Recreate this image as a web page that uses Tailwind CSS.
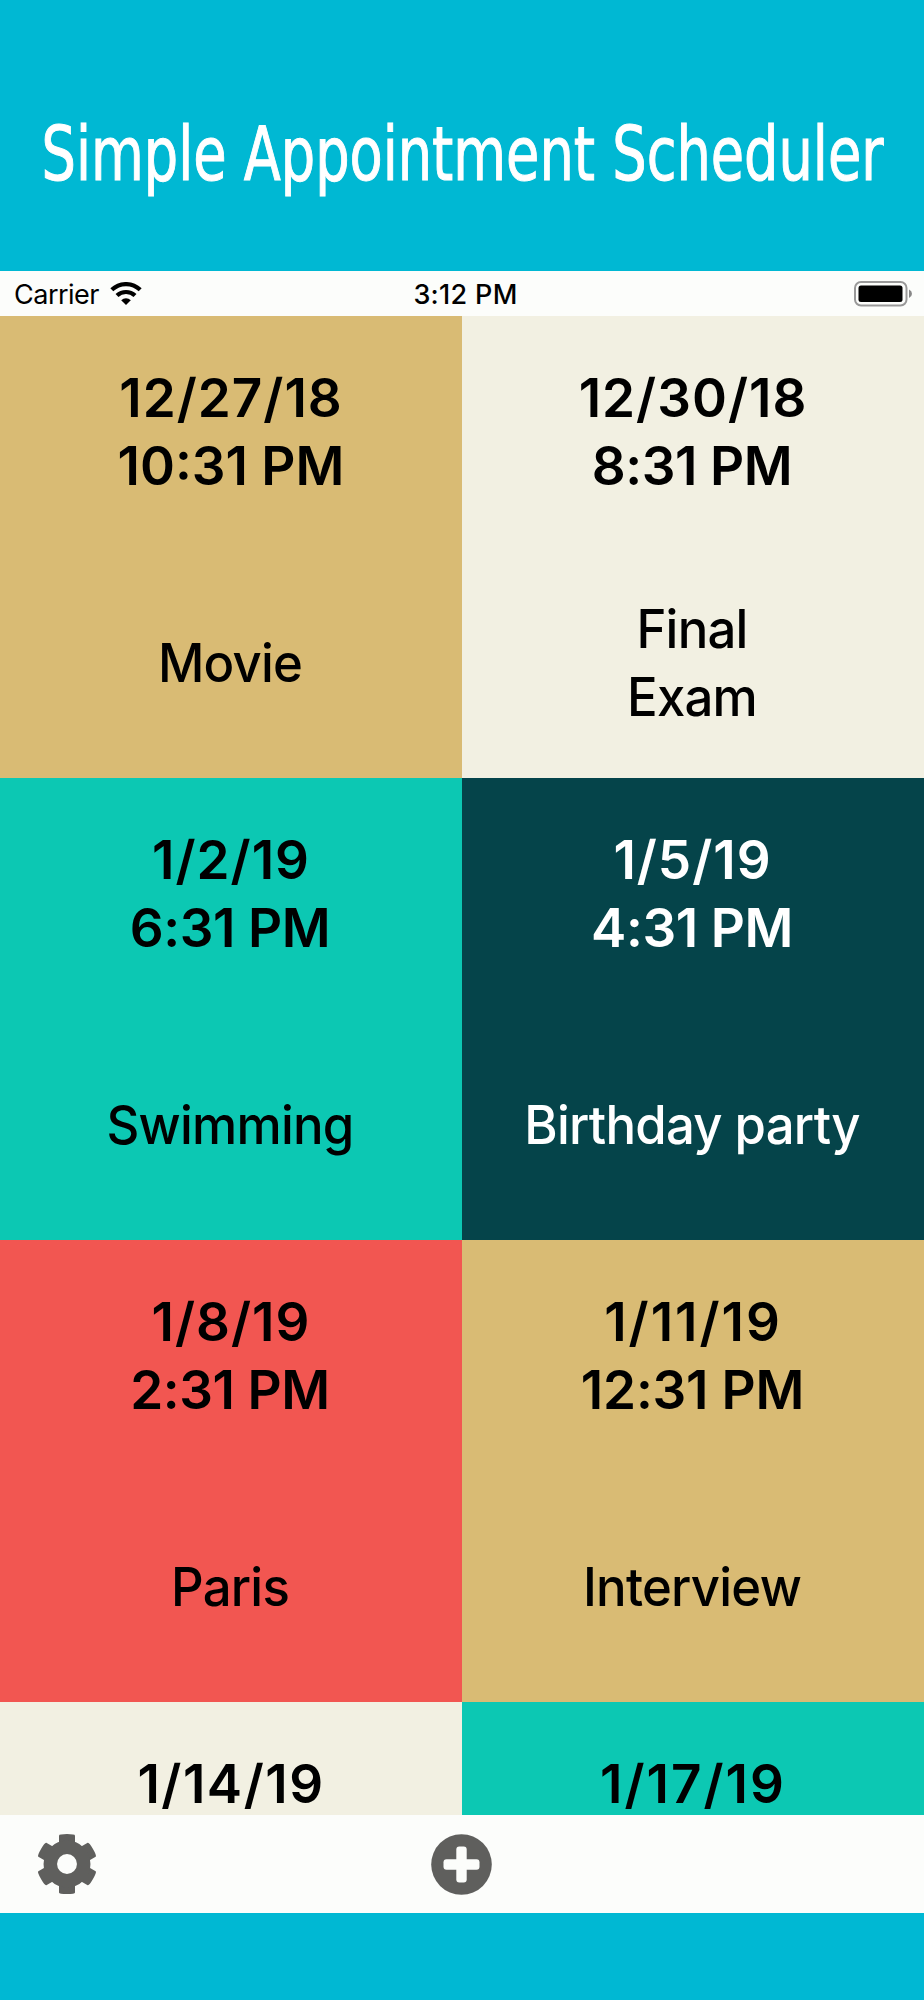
<!DOCTYPE html>
<html lang="en">
<head>
    <meta charset="UTF-8">
    <meta name="viewport" content="width=device-width, initial-scale=1.0">
    <title>Simple Appointment Scheduler</title>
    <script src="https://cdn.jsdelivr.net/npm/@tailwindcss/browser@4"></script>
</head>
<body class="bg-[#00b8d3] text-black w-[924px] h-[2000px] overflow-hidden font-['Inter',sans-serif]">

    <!-- Title -->
    <header class="h-[271px]">
        <svg class="block w-full h-full overflow-visible" viewBox="0 0 924 271" fill="#fff" stroke="#fff" stroke-width="1">
            <text x="41.500" y="179.500" font-family="'DejaVu Sans Condensed','DejaVu Sans',sans-serif" font-size="74.500" textLength="842" lengthAdjust="spacingAndGlyphs">Simple Appointment Scheduler</text>
        </svg>
    </header>

    <!-- Status bar -->
    <div class="h-[45px] bg-[#fcfdfb] grid grid-cols-3 items-center pl-[14px] pr-[11px] text-[27px]">
        <div class="flex items-center gap-[11px]">
            <span class="pt-[3px] tracking-[-0.5px]">Carrier</span>
            <svg class="w-[32px] h-[23px]" viewBox="0 0 32 23" fill="none" stroke="#000" stroke-width="4.200">
                <path d="M1.800 7.800a20.500 20.500 0 0 1 28.400 0"/>
                <path d="M7 13.600a13 13 0 0 1 18 0"/>
                <path d="M11.200 18.200a7 7 0 0 1 9.600 0L16 23z" fill="#000" stroke="none"/>
            </svg>
        </div>
        <span class="text-center font-[550] tracking-[0.3px] pt-[3px] pl-[4px]">3:12 PM</span>
        <svg class="w-[59px] h-[26px] justify-self-end" viewBox="0 0 59 26">
            <rect x="1" y="1" width="51.500" height="23.500" rx="6" fill="none" stroke="#999" stroke-width="2"/>
            <rect x="4.500" y="4.500" width="44" height="16.500" rx="2.500"/>
            <path d="M55 8.500q3 1.500 3 4.300t-3 4.300z" fill="#888"/>
        </svg>
    </div>

    <!-- Appointments -->
    <main class="grid grid-cols-2 auto-rows-[462px] h-[1499px] overflow-hidden text-center text-[53px] leading-[68px]">
        <section class="bg-[#d9bb74] pt-[48px]">
            <div class="h-[136px] font-semibold"><span class="tracking-[1px]">12/27/18</span><br>10:31 PM</div>
            <div class="h-[196px] mt-[65px] pr-[2px] flex items-center justify-center font-medium tracking-[-0.8px] scale-x-96">Movie</div>
        </section>
        <section class="bg-[#f2f0e2] pt-[48px]">
            <div class="h-[136px] font-semibold"><span class="tracking-[1px]">12/30/18</span><br><span class="tracking-[-0.4px] pr-[2px]">8:31 PM</span></div>
            <div class="h-[196px] mt-[65px] pr-[2px] flex items-center justify-center font-medium tracking-[-0.8px] scale-x-96">Final<br>Exam</div>
        </section>
        <section class="bg-[#0cc8b3] pt-[48px]">
            <div class="h-[136px] font-semibold"><span class="tracking-[1px]">1/2/19</span><br><span class="tracking-[-0.4px] pr-[2px]">6:31 PM</span></div>
            <div class="h-[196px] mt-[65px] pr-[2px] flex items-center justify-center font-medium tracking-[-0.8px] scale-x-96">Swimming</div>
        </section>
        <section class="bg-[#05444a] pt-[48px] text-white">
            <div class="h-[136px] font-semibold"><span class="tracking-[1px] pr-[1px]">1/5/19</span><br><span class="tracking-[-0.4px] pr-[2px]">4:31 PM</span></div>
            <div class="h-[196px] mt-[65px] pr-[2px] flex items-center justify-center font-medium tracking-[-0.8px] scale-x-96">Birthday party</div>
        </section>
        <section class="bg-[#f25651] pt-[48px]">
            <div class="h-[136px] font-semibold"><span class="tracking-[1px]">1/8/19</span><br><span class="tracking-[-0.4px] pr-[2px]">2:31 PM</span></div>
            <div class="h-[196px] mt-[65px] pr-[2px] flex items-center justify-center font-medium tracking-[-0.8px] scale-x-96">Paris</div>
        </section>
        <section class="bg-[#d9bb74] pt-[48px]">
            <div class="h-[136px] font-semibold"><span class="tracking-[2px]">1/11/19</span><br><span class="tracking-[-0.2px] pr-[1px]">12:31 PM</span></div>
            <div class="h-[196px] mt-[65px] pr-[2px] flex items-center justify-center font-medium tracking-[-0.8px] scale-x-96">Interview</div>
        </section>
        <section class="bg-[#f2f0e2] pt-[48px]">
            <div class="h-[136px] font-semibold tracking-[1.5px]">1/14/19</div>
        </section>
        <section class="bg-[#0cc8b3] pt-[48px]">
            <div class="h-[136px] font-semibold tracking-[2px]">1/17/19</div>
        </section>
    </main>

    <!-- Toolbar -->
    <nav class="h-[98px] bg-[#fcfdfb] grid grid-cols-3 items-center px-[37px] text-[#5f5f5d]">
        <svg class="w-[60px] h-[62px]" viewBox="-30 -31 60 62" fill="currentColor">
            <path id="tooth" d="M-8-20V-28.500Q-8-30 0-30T8-28.500V-20z"/>
            <use href="#tooth" transform="rotate(60)"/>
            <use href="#tooth" transform="rotate(120)"/>
            <use href="#tooth" transform="rotate(180)"/>
            <use href="#tooth" transform="rotate(240)"/>
            <use href="#tooth" transform="rotate(300)"/>
            <circle r="16.700" fill="none" stroke="currentColor" stroke-width="13.500"/>
        </svg>
        <svg class="w-[61px] h-[61px] justify-self-center" viewBox="0 0 61 61">
            <circle cx="30.500" cy="30.500" r="30.300" fill="currentColor"/>
            <rect x="25.300" y="12.500" width="10.400" height="36" rx="3" fill="#fcfdfb"/>
            <rect x="12.500" y="25.300" width="36" height="10.400" rx="3" fill="#fcfdfb"/>
        </svg>
    </nav>
</body>
</html>
